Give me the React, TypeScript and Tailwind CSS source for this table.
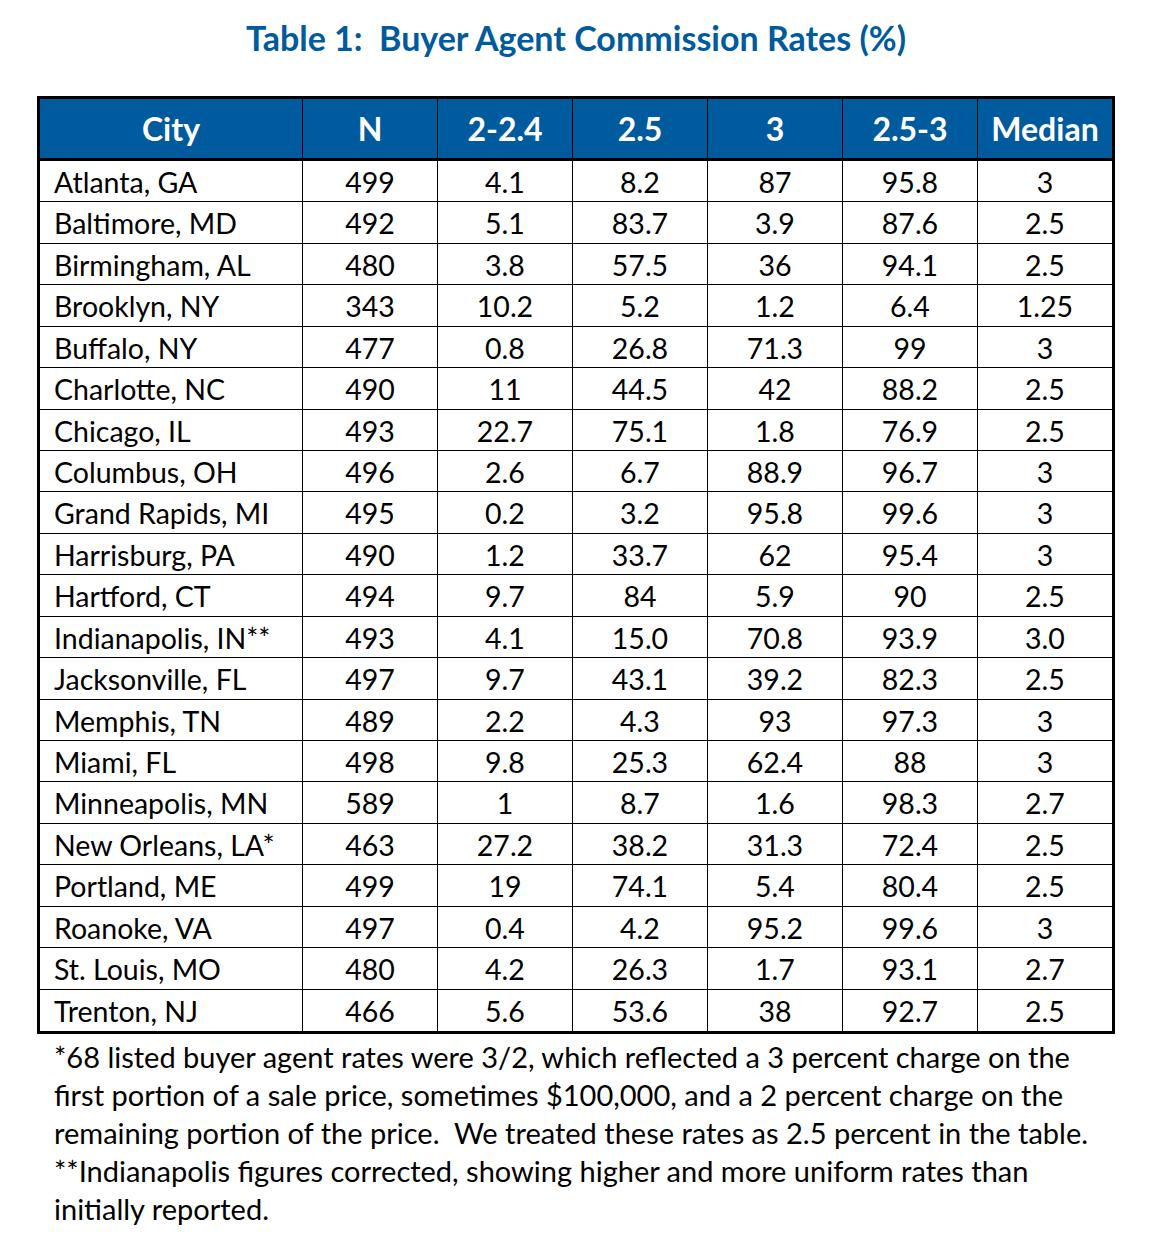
import React from "react";

const rows: string[][] = [
  ["Atlanta, GA", "499", "4.1", "8.2", "87", "95.8", "3"],
  ["Baltimore, MD", "492", "5.1", "83.7", "3.9", "87.6", "2.5"],
  ["Birmingham, AL", "480", "3.8", "57.5", "36", "94.1", "2.5"],
  ["Brooklyn, NY", "343", "10.2", "5.2", "1.2", "6.4", "1.25"],
  ["Buffalo, NY", "477", "0.8", "26.8", "71.3", "99", "3"],
  ["Charlotte, NC", "490", "11", "44.5", "42", "88.2", "2.5"],
  ["Chicago, IL", "493", "22.7", "75.1", "1.8", "76.9", "2.5"],
  ["Columbus, OH", "496", "2.6", "6.7", "88.9", "96.7", "3"],
  ["Grand Rapids, MI", "495", "0.2", "3.2", "95.8", "99.6", "3"],
  ["Harrisburg, PA", "490", "1.2", "33.7", "62", "95.4", "3"],
  ["Hartford, CT", "494", "9.7", "84", "5.9", "90", "2.5"],
  ["Indianapolis, IN**", "493", "4.1", "15.0", "70.8", "93.9", "3.0"],
  ["Jacksonville, FL", "497", "9.7", "43.1", "39.2", "82.3", "2.5"],
  ["Memphis, TN", "489", "2.2", "4.3", "93", "97.3", "3"],
  ["Miami, FL", "498", "9.8", "25.3", "62.4", "88", "3"],
  ["Minneapolis, MN", "589", "1", "8.7", "1.6", "98.3", "2.7"],
  ["New Orleans, LA*", "463", "27.2", "38.2", "31.3", "72.4", "2.5"],
  ["Portland, ME", "499", "19", "74.1", "5.4", "80.4", "2.5"],
  ["Roanoke, VA", "497", "0.4", "4.2", "95.2", "99.6", "3"],
  ["St. Louis, MO", "480", "4.2", "26.3", "1.7", "93.1", "2.7"],
  ["Trenton, NJ", "466", "5.6", "53.6", "38", "92.7", "2.5"],
];

const headers = ["City", "N", "2-2.4", "2.5", "3", "2.5-3", "Median"];

const cols = "grid grid-cols-[263px_135px_135px_135px_135px_135px_134px]";

export default function App() {
  return (
    <div
      className="w-[1164px] min-h-[1252px] bg-white text-black"
      style={{ fontFamily: "Lato, 'Open Sans', sans-serif" }}
    >
      <div className="ml-[37px] w-[1078px] pt-[18px]">
        <h1 className="text-center text-[34px] leading-[40px] font-bold text-[#005a9e] whitespace-pre">
          {"Table 1:  Buyer Agent Commission Rates (%)"}
        </h1>
        <div className="mt-[38px] border-[3px] border-black">
          <div className={`${cols} h-[62px] bg-[#005a9e] border-b-[3px] border-black`}>
            {headers.map((h, i) => (
              <div
                key={h}
                className={`flex items-center justify-center text-white font-bold text-[32px] ${
                  i < 6 ? "border-r border-black" : ""
                }`}
              >
                {h}
              </div>
            ))}
          </div>
          <div className="grid h-[870px] grid-rows-[repeat(21,minmax(0,1fr))]">
            {rows.map((r, ri) => (
              <div
                key={r[0]}
                className={`${cols} ${ri < rows.length - 1 ? "border-b border-black" : ""}`}
              >
                {r.map((c, ci) => (
                  <div
                    key={ci}
                    className={`flex items-center text-[28.5px] ${
                      ci === 0 ? "justify-start pl-[14px]" : "justify-center"
                    } ${ci < 6 ? "border-r border-black" : ""}`}
                  >
                    {c}
                  </div>
                ))}
              </div>
            ))}
          </div>
        </div>
        <div className="mt-[4px] pl-[17px] text-[29px] leading-[38px] whitespace-pre">
          <div>*68 listed buyer agent rates were 3/2, which reflected a 3 percent charge on the</div>
          <div>first portion of a sale price, sometimes $100,000, and a 2 percent charge on the</div>
          <div>{"remaining portion of the price.  We treated these rates as 2.5 percent in the table."}</div>
          <div>**Indianapolis figures corrected, showing higher and more uniform rates than</div>
          <div>initially reported.</div>
        </div>
      </div>
    </div>
  );
}
